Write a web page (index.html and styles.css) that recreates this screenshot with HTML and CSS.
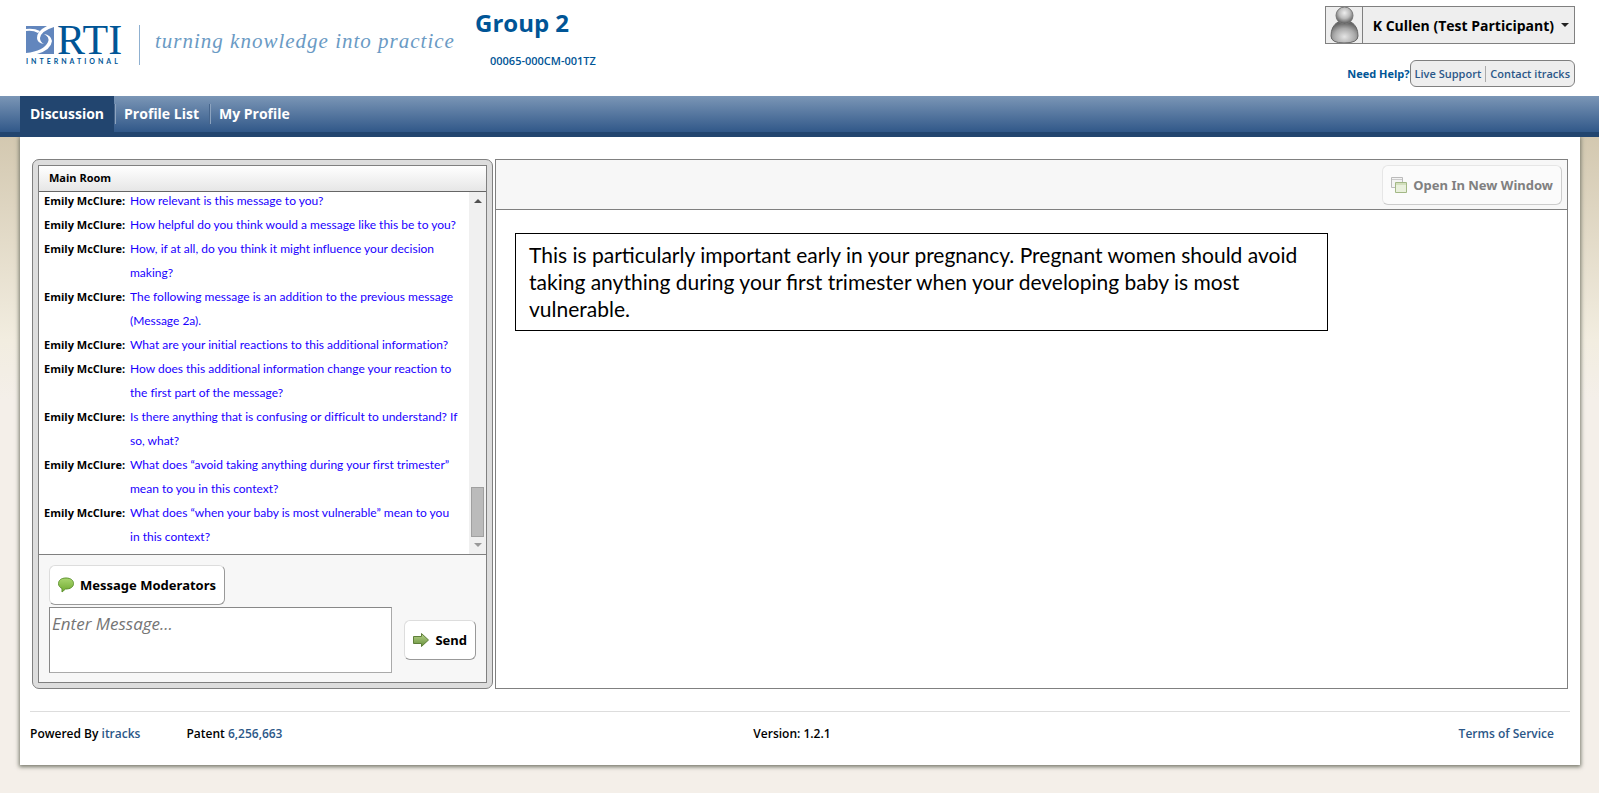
FILE: index.html
```
<!DOCTYPE html>
<html lang="en">
  <head>
    <meta charset="UTF-8" />
    <meta name="viewport" content="width=device-width, initial-scale=1.0" />
    <title>Group 2</title>
    <link rel="stylesheet" href="styles.css">
  </head>
  <body>
    <header class="header">
      <a href="#" class="brand">
        <span class="logo">
          <span class="logo-top">
            <svg class="logo-mark" viewBox="0 0 28 28" aria-hidden="true">
              <rect width="28" height="28" fill="#6286bd" />
              <path d="M0 3 Q8 2 14 5 L12 7 Q7 4 0 5 Z" fill="#fff" />
              <path d="M28 0 H21 Q11 5 11 12 Q11 17 18 18 Q14 16 14 12 Q15 5 28 1 Z" fill="#fff" />
              <path d="M18 8 Q24 11 22 16 Q18 25 0 27 V28 H11 Q25 24 26 15 Q25 9 18 8 Z" fill="#fff" />
            </svg>
            <span class="logo-name">RTI</span>
          </span>
          <span class="logo-sub">INTERNATIONAL</span>
        </span>
        <span class="tagline">turning knowledge into practice</span>
      </a>

      <div class="group">
        <h1>Group 2</h1>
        <p>00065-000CM-001TZ</p>
      </div>

      <div class="account">
        <button class="user-menu" type="button">
          <svg class="avatar" viewBox="0 0 36 36" aria-hidden="true">
            <defs>
              <radialGradient id="head" cx="50%" cy="35%" r="65%">
                <stop offset="0" stop-color="#eee" />
                <stop offset="0.5" stop-color="#bbb" />
                <stop offset="1" stop-color="#555" />
              </radialGradient>
              <radialGradient id="torso" cx="50%" cy="70%" r="65%">
                <stop offset="0" stop-color="#e4e4e4" />
                <stop offset="0.6" stop-color="#aaa" />
                <stop offset="1" stop-color="#666" />
              </radialGradient>
            </defs>
            <path d="M12 15 Q5 19 5 29 Q5 36 18 36 Q32 36 32 29 Q32 19 25 15 Z" fill="url(#torso)" stroke="#666" />
            <circle cx="18.5" cy="8.5" r="8.5" fill="url(#head)" stroke="#777" />
          </svg>
          <span class="user-name">K Cullen (Test Participant)</span>
        </button>
        <div class="help">
          <span class="help-label">Need Help?</span>
          <div class="help-links">
            <a href="#">Live Support</a>
            <a href="#">Contact itracks</a>
          </div>
        </div>
      </div>
    </header>

    <nav class="nav">
      <a href="#" class="active">Discussion</a>
      <a href="#">Profile List</a>
      <a href="#">My Profile</a>
    </nav>

    <main class="page">
      <div class="panels">
        <section class="chat">
          <div class="chat-box">
            <h2>Main Room</h2>

            <div class="chat-log">
              <div class="messages">
                <p><b>Emily McClure:</b><span>How relevant is this message to you?</span></p>
                <p><b>Emily McClure:</b><span>How helpful do you think would a message like this be to you?</span></p>
                <p><b>Emily McClure:</b><span>How, if at all, do you think it might influence your decision making?</span></p>
                <p><b>Emily McClure:</b><span>The following message is an addition to the previous message (Message 2a).</span></p>
                <p><b>Emily McClure:</b><span>What are your initial reactions to this additional information?</span></p>
                <p><b>Emily McClure:</b><span>How does this additional information change your reaction to the first part of the message?</span></p>
                <p><b>Emily McClure:</b><span>Is there anything that is confusing or difficult to understand? If so, what?</span></p>
                <p><b>Emily McClure:</b><span>What does “avoid taking anything during your first trimester” mean to you in this context?</span></p>
                <p><b>Emily McClure:</b><span>What does “when your baby is most vulnerable” mean to you in this context?</span></p>
              </div>
              <div class="scrollbar" aria-hidden="true">
                <span class="arrow up"></span>
                <span class="thumb"></span>
                <span class="arrow down"></span>
              </div>
            </div>

            <form class="chat-form">
              <button type="button">
                <svg viewBox="0 0 16 16" aria-hidden="true">
                  <defs>
                    <linearGradient id="bubble" x2="0" y2="1">
                      <stop offset="0" stop-color="#a9d66f" />
                      <stop offset="1" stop-color="#6fa92f" />
                    </linearGradient>
                  </defs>
                  <path d="M8 1 C3 1 0.5 3.5 0.5 6.5 C0.5 9 2 10.5 4 11.5 L4 15 L7.5 12 C12.5 12 15.5 10 15.5 6.5 C15.5 3.5 13 1 8 1 Z" fill="url(#bubble)" stroke="#5f9330" />
                </svg>
                Message Moderators
              </button>
              <div class="compose">
                <textarea aria-label="Message" placeholder="Enter Message..."></textarea>
                <button type="submit">
                  <svg viewBox="0 0 16 16" aria-hidden="true">
                    <defs>
                      <linearGradient id="send" x2="0" y2="1">
                        <stop offset="0" stop-color="#b9d48d" />
                        <stop offset="1" stop-color="#66903a" />
                      </linearGradient>
                    </defs>
                    <path d="M0.5 4.5 H8.5 V1.5 L15.5 8 L8.5 14.5 V11.5 H0.5 Z" fill="url(#send)" stroke="#5f7f3a" />
                  </svg>
                  Send
                </button>
              </div>
            </form>
          </div>
        </section>

        <section class="board">
          <div class="board-bar">
            <button type="button" disabled>
              <svg viewBox="0 0 16 16" aria-hidden="true">
                <path d="M0.5 0.5 H11.5 V10.5 H0.5 Z" fill="#f4f4f4" stroke="#bbb" />
                <path d="M1 2.5 H11" stroke="#ccc" />
                <path d="M4.5 5.5 H15.5 V15.5 H4.5 Z" fill="#e9f0dc" stroke="#a3b886" />
                <path d="M5 7 H15" stroke="#bccf9f" />
              </svg>
              Open In New Window
            </button>
          </div>
          <p class="notice">This is particularly important early in your pregnancy. Pregnant women should avoid taking anything during your first trimester when your developing baby is most vulnerable.</p>
        </section>
      </div>

      <footer class="footer">
        <div>
          <span>Powered By <a href="#">itracks</a></span>
          <span>Patent <a href="#">6,256,663</a></span>
        </div>
        <span>Version: 1.2.1</span>
        <a href="#">Terms of Service</a>
      </footer>
    </main>
  </body>
</html>
```

FILE: styles.css
```
* {
  box-sizing: border-box;
}

body {
  margin: 0;
  padding-bottom: 27px;
  font-family: 'Open Sans', 'Noto Sans', sans-serif;
  font-size: 11px;
  color: #000;
  background: #f4efe9 linear-gradient(#d3c8b0 136px, #f2ede0 340px, #f4efe9 400px) no-repeat;
}

h1,
h2,
p {
  margin: 0;
}

a {
  color: #2b5788;
  text-decoration: none;
}

button {
  display: flex;
  align-items: center;
  gap: 6px;
  height: 40px;
  padding: 0 8px;
  border: 1px solid #999;
  border-top-color: #ddd;
  border-left-color: #ddd;
  border-radius: 6px;
  background-color: #fff;
  font-family: 'Noto Sans', sans-serif;
  font-size: 13px;
  font-weight: 700;
  color: #000;
  cursor: pointer;
}

button svg {
  width: 16px;
  height: 16px;
}

button:disabled {
  border-color: #e6e6e6 #ccc #ccc #e6e6e6;
  background-color: #fbfbfb;
  color: #808080;
  cursor: default;
}

/* header */
.header {
  display: flex;
  height: 96px;
  padding: 0 24px 0 26px;
  background-color: #fff;
}

.brand {
  display: flex;
  align-items: flex-start;
  width: 449px;
  padding-top: 25px;
}

.logo {
  width: 113px;
  padding-top: 1px;
  color: #005596;
}

.logo-top {
  display: flex;
  height: 28px;
  gap: 3px;
}

.logo-mark {
  width: 28px;
  height: 28px;
}

.logo-name {
  font-family: 'Liberation Serif', serif;
  font-size: 42px;
  line-height: 28px;
}

.logo-sub {
  display: block;
  font-family: Lato, sans-serif;
  font-size: 7px;
  font-weight: 700;
  line-height: 14px;
  letter-spacing: 3px;
}

.tagline {
  height: 40px;
  padding-left: 15px;
  border-left: 1px solid #8fb0d0;
  font-family: 'Liberation Serif', serif;
  font-size: 21px;
  font-style: italic;
  line-height: 32px;
  letter-spacing: 1px;
  white-space: nowrap;
  color: #6a9ac4;
}

.group {
  color: #005596;
}

.group h1 {
  padding-top: 7px;
  font-size: 24px;
  line-height: 32px;
}

.group p {
  padding: 14px 0 0 15px;
  font-weight: 600;
  line-height: 16px;
}

.account {
  display: flex;
  flex-direction: column;
  align-items: flex-end;
  gap: 16px;
  margin-left: auto;
  padding-top: 6px;
}

.user-menu {
  gap: 0;
  height: 38px;
  padding: 0;
  border-color: #808080;
  border-radius: 0;
  background-color: #eee;
  font-family: inherit;
  font-size: 14px;
}

.user-menu .avatar {
  width: 36px;
  height: 36px;
}

.user-name {
  display: flex;
  align-items: center;
  gap: 7px;
  height: 36px;
  padding: 0 5px 0 10px;
  border-left: 1px solid #808080;
}

.user-name::after {
  content: '';
  border: 4px solid transparent;
  border-top-color: #222;
  border-bottom: 0;
}

.help {
  display: flex;
  align-items: center;
  font-weight: 600;
}

.help-label {
  font-weight: 700;
  color: #005596;
}

.help-links {
  display: flex;
  align-items: center;
  height: 27px;
  border: 1px solid #808080;
  border-radius: 6px;
  background-color: #eee;
}

.help-links a {
  padding: 0 4px;
  line-height: 16px;
}

.help-links a + a {
  border-left: 1px solid #aaa;
}

/* navigation */
.nav {
  display: flex;
  height: 41px;
  padding-left: 20px;
  border-bottom: 5px solid #22456f;
  background: linear-gradient(#7b96b6, #315889);
}

.nav a {
  height: 36px;
  padding: 0 10px;
  font-size: 14px;
  font-weight: 700;
  line-height: 35px;
  color: #fff;
}

.nav a + a {
  background: linear-gradient(90deg, #46658c 1px, #8ca3bf 1px) no-repeat 0 8px / 2px 20px;
}

.nav .active {
  background-color: #22456f;
}

/* content */
.page {
  margin: 0 19px 0 20px;
  padding: 22px 12px 0;
  background-color: #fff;
  box-shadow: 0 1px 4px 1px #77796c;
  clip-path: inset(0 -8px -8px -8px);
}

.panels {
  display: flex;
  gap: 2px;
}

.chat {
  width: 461px;
  padding: 5px;
  border: 1px solid #808080;
  border-radius: 7px;
  background-color: #ddd;
}

.chat-box {
  border: 1px solid #808080;
  background-color: #f7f7f7;
}

.chat h2 {
  padding: 0 10px 1px;
  border-bottom: 1px solid #666;
  background: linear-gradient(#fff, #e6e6e6);
  font-size: 11px;
  font-weight: 700;
  line-height: 24px;
}

.chat-log {
  display: flex;
  height: 363px;
  border-bottom: 1px solid #808080;
  background-color: #fff;
}

/* scrolled to the latest message */
.messages {
  display: flex;
  flex: 1;
  flex-direction: column;
  justify-content: flex-end;
  padding: 0 8px 5px 5px;
  overflow: hidden;
  line-height: 24px;
}

.messages p {
  display: grid;
  grid-template-columns: 86px 1fr;
}

.messages b {
  white-space: nowrap;
}

.messages span {
  font-family: Lato, sans-serif;
  font-size: 12px;
  font-variant-ligatures: none;
  color: #1a00ff;
}

.scrollbar {
  display: flex;
  flex-direction: column;
  align-items: center;
  width: 17px;
  padding: 7px 0;
  background-color: #f0f0f0;
}

.arrow {
  border: 4px solid transparent;
}

.arrow.up {
  border-top: 0;
  border-bottom-color: #505050;
}

.arrow.down {
  margin-top: 6px;
  border-bottom: 0;
  border-top-color: #999;
}

.thumb {
  width: 13px;
  height: 50px;
  margin-top: auto;
  border: 1px solid #a0a0a0;
  background-color: #bbb;
}

.chat-form {
  padding: 10px 10px 9px;
}

.compose {
  display: flex;
  align-items: center;
  justify-content: space-between;
  margin-top: 2px;
}

.compose textarea {
  width: 343px;
  height: 66px;
  padding: 4px 2px;
  border: 1px solid #aaa;
  border-top-color: #888;
  border-left-color: #888;
  font-family: inherit;
  font-size: 17px;
  line-height: 24px;
  resize: none;
}

.compose textarea::placeholder {
  font-style: italic;
  color: #757575;
}

.board {
  flex: 1;
  border: 1px solid #808080;
}

.board-bar {
  display: flex;
  align-items: center;
  justify-content: flex-end;
  height: 50px;
  padding-right: 5px;
  border-bottom: 1px solid #808080;
  background-color: #f7f7f7;
}

.notice {
  max-width: 813px;
  margin: 23px 19px;
  padding: 7px 13px 8px;
  border: 1px solid #000;
  font-family: Lato, sans-serif;
  font-size: 21px;
  line-height: 27px;
}

/* footer */
.footer {
  display: grid;
  grid-template-columns: 1fr auto 1fr;
  margin: 22px -2px 0;
  padding: 14px 16px 23px 0;
  border-top: 1px solid #ddd;
  font-size: 12px;
  font-weight: 600;
  line-height: 16px;
}

.footer div {
  display: flex;
  gap: 46px;
}

.footer > a {
  justify-self: end;
}
```
